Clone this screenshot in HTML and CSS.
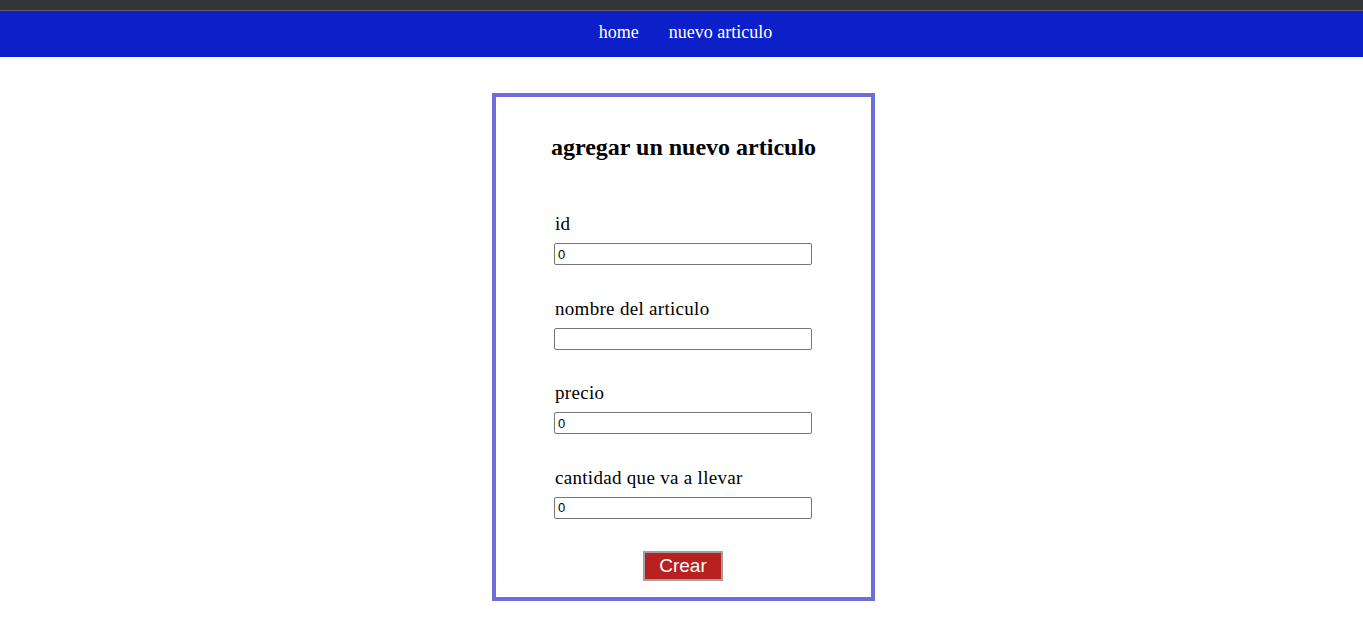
FILE: index.html
```html
<!DOCTYPE html>
<html lang="es">
<head>
<meta charset="utf-8">
<title>nuevo articulo</title>
<link rel="stylesheet" href="styles.css">
</head>
<body>
<div class="topbar"></div>
<nav class="nav">
  <a href="#" class="nav-link">home</a>
  <a href="#" class="nav-link">nuevo articulo</a>
</nav>
<main class="main">
  <form class="card">
    <h2 class="card-title">agregar un nuevo articulo</h2>
    <div class="field">
      <label class="field-label">id</label>
      <input class="field-input" type="text" value="0">
    </div>
    <div class="field">
      <label class="field-label">nombre del articulo</label>
      <input class="field-input" type="text" value="">
    </div>
    <div class="field">
      <label class="field-label">precio</label>
      <input class="field-input" type="text" value="0">
    </div>
    <div class="field">
      <label class="field-label">cantidad que va a llevar</label>
      <input class="field-input" type="text" value="0">
    </div>
    <div class="actions">
      <button type="button" class="btn">Crear</button>
    </div>
  </form>
</main>
</body>
</html>
```
FILE: styles.css
```css
html, body {
  margin: 0;
  padding: 0;
  background: #ffffff;
  font-family: "Liberation Serif", "Times New Roman", serif;
}
.topbar {
  height: 10px;
  background: #35363a;
  border-bottom: 1px solid #5f6368;
}
.nav {
  height: 46px;
  background: #0c1fc9;
  display: flex;
  justify-content: center;
  align-items: center;
  gap: 30px;
  padding-left: 8px;
}
.nav-link {
  color: #ffffff;
  text-decoration: none;
  font-size: 18px;
  line-height: 20px;
  margin-top: -4px;
}
.main {
  display: flex;
  justify-content: center;
  padding-top: 36px;
  padding-left: 4px;
}
.card {
  width: 375px;
  border: 4px solid #6e6ed8;
  padding: 36px 0 16px;
  display: flex;
  flex-direction: column;
}
.card-title {
  margin: 0 0 52px;
  text-align: center;
  font-size: 24px;
  line-height: 28px;
  font-weight: bold;
}
.field {
  width: 258px;
  margin-left: 58px;
  display: flex;
  flex-direction: column;
  margin-bottom: 32.5px;
}
.field-label {
  font-size: 19px;
  line-height: 21px;
  margin-bottom: 9px;
  padding-left: 1px;
  letter-spacing: 0.3px;
}
.field-input {
  box-sizing: border-box;
  width: 258px;
  height: 22px;
  margin: 0;
  border: 1px solid #767676;
  border-radius: 2px;
  padding: 1px 3px;
  font-family: "Liberation Sans", Arial, sans-serif;
  font-size: 13px;
  color: #000;
}
.actions {
  display: flex;
  justify-content: center;
  margin-left: -1px;
}
.btn {
  box-sizing: border-box;
  width: 80px;
  height: 30px;
  background: #b92020;
  border: 2px solid #a0a0a0;
  color: #ffffff;
  font-family: "Liberation Sans", Arial, sans-serif;
  font-size: 19px;
  padding: 0;
  line-height: 24px;
}
```
